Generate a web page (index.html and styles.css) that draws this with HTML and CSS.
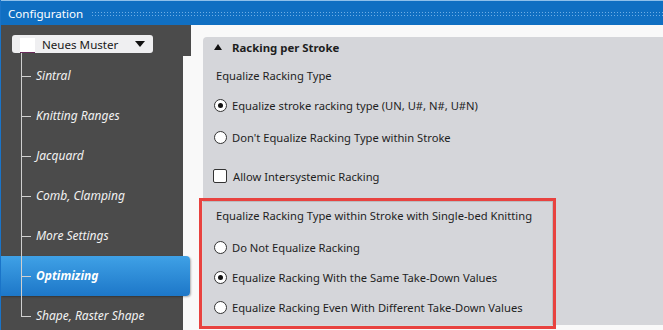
FILE: index.html
```html
<!DOCTYPE html>
<html lang="en">
<head>
    <meta charset="UTF-8">
    <title>Configuration</title>
    <link rel="stylesheet" href="styles.css">
</head>
<body>
    <div class="window">
        <div class="titlebar">
            <span class="title">Configuration</span>
            <span class="grip"></span>
        </div>

        <div class="content">
            <aside class="sidebar">
                <div class="sidebar-head">
                    <div class="pattern-select">
                        <span class="swatch"></span>
                        <span class="pattern-name">Neues Muster</span>
                        <span class="caret"></span>
                    </div>
                </div>
                <ul class="tree">
                    <li class="tree-item">Sintral</li>
                    <li class="tree-item">Knitting Ranges</li>
                    <li class="tree-item">Jacquard</li>
                    <li class="tree-item">Comb, Clamping</li>
                    <li class="tree-item">More Settings</li>
                    <li class="tree-item selected">Optimizing</li>
                    <li class="tree-item">Shape, Raster Shape</li>
                </ul>
            </aside>

            <main class="main">
                <section class="panel">
                    <div class="panel-head">
                        <span class="collapse"></span>
                        Racking per Stroke
                    </div>

                    <div class="row group-label">Equalize Racking Type</div>
                    <div class="row option"><span class="radio checked"></span>Equalize stroke racking type (UN, U#, N#, U#N)</div>
                    <div class="row option second"><span class="radio"></span>Don't Equalize Racking Type within Stroke</div>
                    <div class="row option check-row"><span class="checkbox"></span>Allow Intersystemic Racking</div>

                    <!-- highlighted group -->
                    <div class="marked">
                        <div class="row group-label">Equalize Racking Type within Stroke with Single-bed Knitting</div>
                        <div class="row option first"><span class="radio"></span>Do Not Equalize Racking</div>
                        <div class="row option"><span class="radio checked"></span>Equalize Racking With the Same Take-Down Values</div>
                        <div class="row option"><span class="radio"></span>Equalize Racking Even With Different Take-Down Values</div>
                    </div>
                </section>
            </main>
        </div>
    </div>
</body>
</html>
```

FILE: styles.css
```css
* {
    box-sizing: border-box;
}
body {
    margin: 0;
    font-family: "Noto Sans", "Open Sans", sans-serif;
    font-size: 11.2px;
    overflow: hidden;
}
.window {
    width: 663px;
    height: 330px;
    overflow: hidden;
    border-left: 1px solid #1a74c8;
    background-color: #f9f9f9;
}
.titlebar {
    height: 25px;
    background-color: #106fc2;
    border-top: 1px solid #8fc0ea;
    display: flex;
    align-items: center;
    padding-left: 7px;
}
.title {
    color: #fff;
    font-size: 11.6px;
}
.grip {
    flex: 1;
    height: 5px;
    margin-left: 8px;
    background-image: radial-gradient(circle, #6eaee6 0.7px, transparent 0.8px);
    background-size: 3px 3px;
}
.content {
    display: flex;
    height: 305px;
}
.sidebar {
    width: 190px;
    flex-shrink: 0;
}
.sidebar-head {
    height: 31px;
    background-color: #4b4b4b;
    padding: 10px 0 0 11px;
}
.pattern-select {
    width: 141px;
    height: 18px;
    background-color: #efeff1;
    border-radius: 3px;
    display: flex;
    align-items: center;
    padding-left: 8px;
}
.swatch {
    width: 15px;
    height: 15px;
    background-color: #fff;
    border-bottom: 1px solid #6a2c5c;
    margin-top: 2px;
}
.pattern-name {
    margin-left: 7px;
    font-size: 11.6px;
    color: #1a1a1a;
}
.caret {
    margin-left: auto;
    margin-right: 8px;
    border-left: 5px solid transparent;
    border-right: 5px solid transparent;
    border-top: 6px solid #111;
}
.tree {
    list-style: none;
    margin: 0;
    padding: 0;
    background: linear-gradient(to right, #4b4b4b 182px, transparent 182px);
}
.tree-item {
    position: relative;
    height: 40px;
    line-height: 40px;
    padding-left: 35px;
    color: #f2f2f2;
    font-style: italic;
    font-size: 12px;
}
/* tree connector lines */
.tree-item::before {
    content: "";
    position: absolute;
    left: 20px;
    top: 0;
    bottom: 0;
    width: 1px;
    background-color: #cfcfcf;
}
.tree-item:first-child::before {
    top: -3px;
}
.tree-item:last-child::before {
    bottom: 50%;
}
.tree-item::after {
    content: "";
    position: absolute;
    left: 20px;
    top: 50%;
    width: 10px;
    height: 1px;
    background-color: #cfcfcf;
}
.tree-item.selected {
    width: 189px;
    font-weight: bold;
    color: #fff;
    background: linear-gradient(#3fa1e6, #1d77c8);
    border-radius: 0 4px 4px 0;
    box-shadow: 1px 1px 2px rgba(0, 0, 0, 0.3);
}
.main {
    flex: 1;
    padding: 12px 0 0 12px;
}
.panel {
    height: 288px;
    background-color: #d5d6da;
    border-radius: 4px 0 0 0;
    color: #1e1e1e;
    white-space: nowrap;
}
.panel-head {
    height: 20px;
    display: flex;
    align-items: center;
    padding-left: 11px;
    font-weight: bold;
    font-size: 11.4px;
}
.collapse {
    width: 0;
    height: 0;
    border-left: 4px solid transparent;
    border-right: 4px solid transparent;
    border-bottom: 6px solid #111;
    margin-right: 10px;
}
.row {
    height: 30px;
    display: flex;
    align-items: center;
    padding-left: 11px;
}
.group-label {
    margin-top: 3px;
    padding-left: 13px;
}
.option.second {
    margin-top: 2px;
}
.option.check-row {
    margin-top: 9px;
    padding-left: 10px;
}
.radio {
    width: 13px;
    height: 13px;
    border: 1px solid #333;
    border-radius: 50%;
    background-color: #fff;
    margin-right: 5px;
    display: flex;
    align-items: center;
    justify-content: center;
}
.radio.checked::after {
    content: "";
    width: 5px;
    height: 5px;
    border-radius: 50%;
    background-color: #111;
}
.checkbox {
    width: 14px;
    height: 14px;
    border: 1px solid #333;
    border-radius: 2px;
    background-color: #fff;
    margin-right: 6px;
}
.marked {
    margin-top: 7px;
    margin-left: -4px;
    width: 357px;
    border: 3px solid #e8423f;
    box-shadow: inset 0 0 0 1px rgba(0, 0, 0, 0.12);
    padding-bottom: 4px;
}
.marked .row {
    padding-left: 12px;
}
.marked .group-label {
    margin-top: 0;
    height: 28px;
    padding-left: 14px;
}
.marked .option.first {
    margin-top: 3px;
}
```
